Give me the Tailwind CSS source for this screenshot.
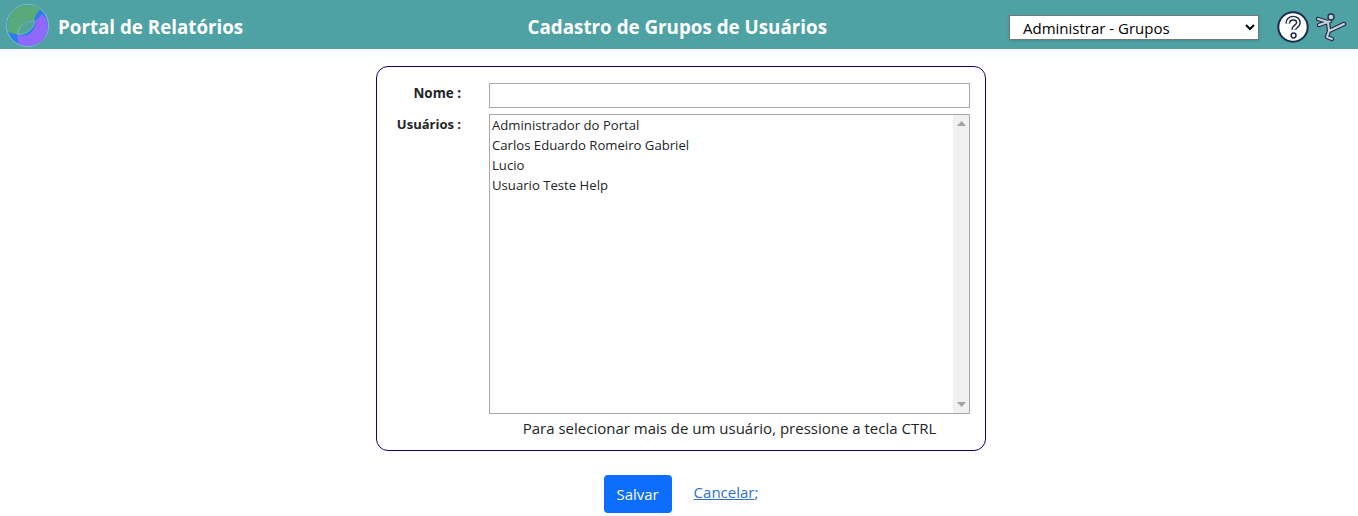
<!DOCTYPE html>
<html lang="pt-BR">
<head>
<meta charset="utf-8">
<title>Cadastro de Grupos de Usuários</title>
<script src="https://cdn.jsdelivr.net/npm/@tailwindcss/browser@4"></script>
</head>
<body class="bg-white text-[#212529] font-['Open_Sans','Noto_Sans',sans-serif] text-[15px] overflow-hidden">
<header class="h-[49px] bg-[#4ea2a4] grid grid-cols-[1fr_auto_531px] items-center text-white">
  <div class="flex items-center pl-[6px] gap-[9px]">
    <svg class="w-[43px] h-[43px] mt-[2px]" viewBox="0 0 44 44">
      <circle cx="22" cy="22" r="21.5" fill="#2b7de9" stroke="#7fc4c8" stroke-width="1"/>
      <path d="M2 28C-1 12 9 1 22 1c6 0 10 1 13 4c-3 4-6 8-6 12c-8-2-15 3-17 14C8 31 4 30 2 28z" fill="#5aa97c"/>
      <path d="M37 10c4 4 6 8 6 13c0 12-9 20-21 20c-4 0-7-1-9-2c-1-3-1-6-1-10c4 2 9 2 13-1c4-3 6-8 5-13c3-2 5-4 7-7z" fill="#8f69fb"/>
      <path d="M12 31c0-7 6-14 17-14c1 7-8 15-17 14z" fill="#52a594" stroke="#8fc7b5" stroke-width=".7"/>
    </svg>
    <span class="text-[18.75px] font-bold leading-none mt-[6px]">Portal de Relatórios</span>
  </div>
  <h1 class="text-[18.8px] font-bold leading-none mt-[6px] -ml-[1px]">Cadastro de Grupos de Usuários</h1>
  <div class="flex items-center justify-end gap-[18px] pr-[10px] pt-[4px]">
    <select class="w-[250px] h-[25px] mt-[2px] bg-white text-black text-[15px] pl-[9px] border border-[#767676] shadow-sm">
      <option>Administrar - Grupos</option>
    </select>
    <div class="flex items-center gap-[7px]">
      <svg class="w-[32px] h-[32px]" viewBox="0 0 32 32">
        <circle cx="16" cy="16" r="14.7" fill="#fff" stroke="#1d2a4d" stroke-width="2"/>
        <path d="M10.800 12.500c0-3.200 2.300-5.300 5.400-5.300c3 0 5.200 1.900 5.200 4.500c0 3.400-4.700 3.700-4.700 7" fill="none" stroke="#1d2a4d" stroke-width="5"/>
        <path d="M10.800 12.500c0-3.200 2.300-5.300 5.400-5.300c3 0 5.200 1.900 5.200 4.500c0 3.400-4.700 3.700-4.700 7" fill="none" stroke="#fff" stroke-width="2.200"/>
        <circle cx="16.600" cy="24.500" r="2.400" fill="#fff" stroke="#1d2a4d" stroke-width="1.500"/>
      </svg>
      <svg class="w-[32px] h-[32px]" viewBox="0 0 32 32">
        <g fill="none" stroke-linecap="round" stroke-linejoin="round">
          <path d="M2 8l10 3l2-1M3 14l9-3M12 11l1 9l15-7M13 20l-2 6l5 2" stroke="#26304f" stroke-width="4.400"/>
          <path d="M2 8l10 3l2-1M3 14l9-3M12 11l1 9l15-7M13 20l-2 6l5 2" stroke="#c9d2d9" stroke-width="2"/>
        </g>
        <circle cx="15" cy="6" r="3" fill="#c9d2d9" stroke="#26304f" stroke-width="1.400"/>
      </svg>
    </div>
  </div>
</header>

<main class="w-[610px] ml-[376px] mt-[17px]">
  <form class="border border-[#15006b] rounded-[12px] h-[385px] pt-[16px] pr-[15px] grid grid-cols-[84px_481px] gap-x-[28px] gap-y-[6px] grid-rows-[25px_300px_auto]">
    <label class="font-bold text-[13.400px] text-right leading-[20px]" for="nome">Nome :</label>
    <input id="nome" class="border border-[#a9a9a9] bg-white h-[25px]" type="text">
    <label class="font-bold text-[13px] text-right leading-[20px]" for="usuarios">Usuários :</label>
    <div class="border border-[#a9a9a9] flex h-[300px]">
      <select id="usuarios" multiple class="flex-1 min-w-0 h-full pt-[1px] text-[13.150px] text-[#212529] overflow-hidden outline-none">
        <option class="h-[20px] leading-[20px] px-[2px] py-0">Administrador do Portal</option>
        <option class="h-[20px] leading-[20px] px-[2px] py-0">Carlos Eduardo Romeiro Gabriel</option>
        <option class="h-[20px] leading-[20px] px-[2px] py-0">Lucio</option>
        <option class="h-[20px] leading-[20px] px-[2px] py-0">Usuario Teste Help</option>
      </select>
      <div class="w-[16px] bg-[#f0f0f0] flex flex-col justify-between items-center py-[6px]">
        <svg class="w-[9px] h-[5px]" viewBox="0 0 9 5"><path d="M4.500 0L9 5H0z" fill="#a3a3a3"/></svg>
        <svg class="w-[9px] h-[5px]" viewBox="0 0 9 5"><path d="M0 0H9L4.500 5z" fill="#a3a3a3"/></svg>
      </div>
    </div>
    <p class="col-start-2 text-center text-[15px] leading-[20px] -mt-[2px]">Para selecionar mais de um usuário, pressione a tecla CTRL</p>
  </form>
  <div class="flex items-start justify-center gap-[22px] mt-[24px]">
    <button type="button" class="w-[68px] h-[38px] bg-[#0d6efd] text-white rounded-[4px] text-[15px]">Salvar</button>
    <span class="leading-[20px] mt-[7px]"><a href="#" class="text-[#2f6fd0] underline">Cancelar</a><span class="text-[#2f6fd0]">;</span></span>
  </div>
</main>
</body>
</html>
